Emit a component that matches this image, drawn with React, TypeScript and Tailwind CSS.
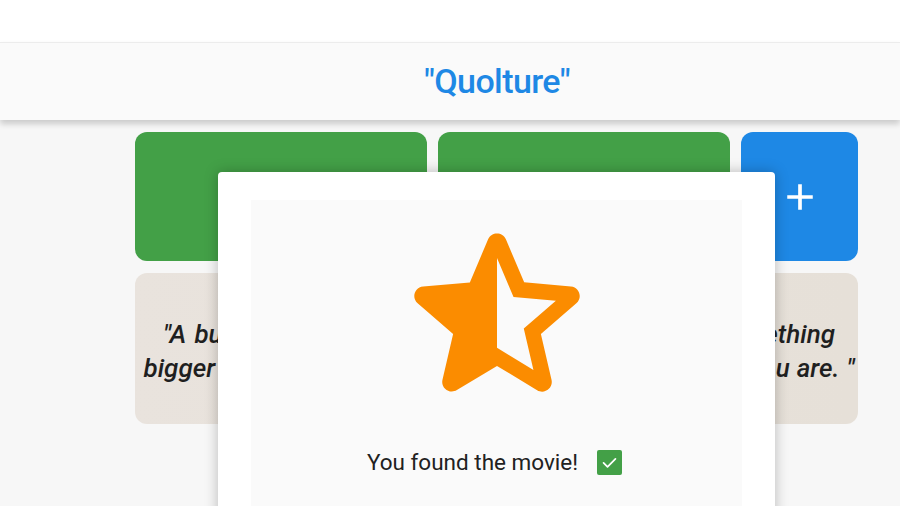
import React from "react";

const roboto = { fontFamily: "Roboto, 'Noto Sans', sans-serif" };

function StarHalf() {
  return (
    <svg width="232" height="232" viewBox="0 0 24 24" className="block">
      <path
        d="M19.65 9.04l-4.84-.42-1.89-4.45c-.34-.81-1.5-.81-1.84 0L9.19 8.63l-4.83.41c-.88.07-1.24 1.17-.57 1.75l3.67 3.18-1.1 4.72c-.2.86.73 1.54 1.49 1.08l4.15-2.5 4.15 2.51c.76.46 1.69-.22 1.49-1.08l-1.1-4.73 3.67-3.18c.67-.58.32-1.68-.56-1.75zM12 15.4V6.1l1.71 4.04 4.38.38-3.32 2.88 1 4.28L12 15.4z"
        fill="#fb8c00"
      />
    </svg>
  );
}

function CheckBox() {
  return (
    <span className="inline-flex h-[25px] w-[25px] items-center justify-center rounded-[2px] bg-[#43a047]">
      <svg width="19" height="19" viewBox="0 0 24 24" fill="none" stroke="#fff" strokeWidth="2.2" strokeLinecap="round" strokeLinejoin="round">
        <path d="M4.5 12.5l5 5 10-10" />
      </svg>
    </span>
  );
}

export default function App() {
  return (
    <div className="relative h-[506px] w-[900px] overflow-hidden bg-[#f7f7f7]" style={roboto}>
      <div className="h-[42px] bg-white" />
      <header className="relative z-10 flex h-[78px] items-center justify-center border-t border-[#ececec] bg-[#fafafa] pl-[94px] shadow-[0_4px_6px_rgba(0,0,0,0.18)]">
        <h1 className="text-[34px] font-medium tracking-[-0.6px] text-[#1e88e5]">"Quolture"</h1>
      </header>

      <main className="ml-[135px] w-[723px] pt-[12px]">
        <div className="flex gap-[11px]">
          <div className="h-[129px] w-[292px] rounded-[12px] bg-[#43a047]" />
          <div className="h-[129px] w-[292px] rounded-[12px] bg-[#43a047]" />
          <div className="flex h-[129px] w-[117px] items-center justify-center rounded-[12px] bg-[#1e88e5]">
            <svg width="34" height="34" viewBox="0 0 24 24" fill="none" stroke="#fff" strokeWidth="2.6">
              <path d="M12 3v18M3 12h18" />
            </svg>
          </div>
        </div>
        <div className="mt-[12px] flex h-[151px] flex-col items-center justify-center rounded-[12px] bg-gradient-to-r from-[#e9e3dd] to-[#e6e0d8] pl-[5px] pt-[4px] text-[26px] font-medium italic leading-[34px] text-[#1f1f1f]">
          <p className="w-[672px] whitespace-nowrap text-justify [text-align-last:justify]">
            "A burden shared is a lighter load, and a part of something
          </p>
          <p className="w-[711px] whitespace-nowrap text-justify [text-align-last:justify]">
            bigger than yourself, and a tiny piece of who you feel you are. "
          </p>
        </div>
      </main>

      <div className="absolute left-[218px] top-[172px] z-20 h-[360px] w-[557px] rounded-t-[4px] bg-white px-[33px] pt-[28px] shadow-[0_0_14px_rgba(0,0,0,0.25)]">
        <div className="flex h-full flex-col items-center bg-[#fafafa]">
          <div className="-mt-[1px]">
            <StarHalf />
          </div>
          <div className="mt-[15px] flex items-center gap-[19px] pr-[4px]">
            <span className="text-[22.5px] text-[#212121]">You found the movie!</span>
            <CheckBox />
          </div>
        </div>
      </div>
    </div>
  );
}
